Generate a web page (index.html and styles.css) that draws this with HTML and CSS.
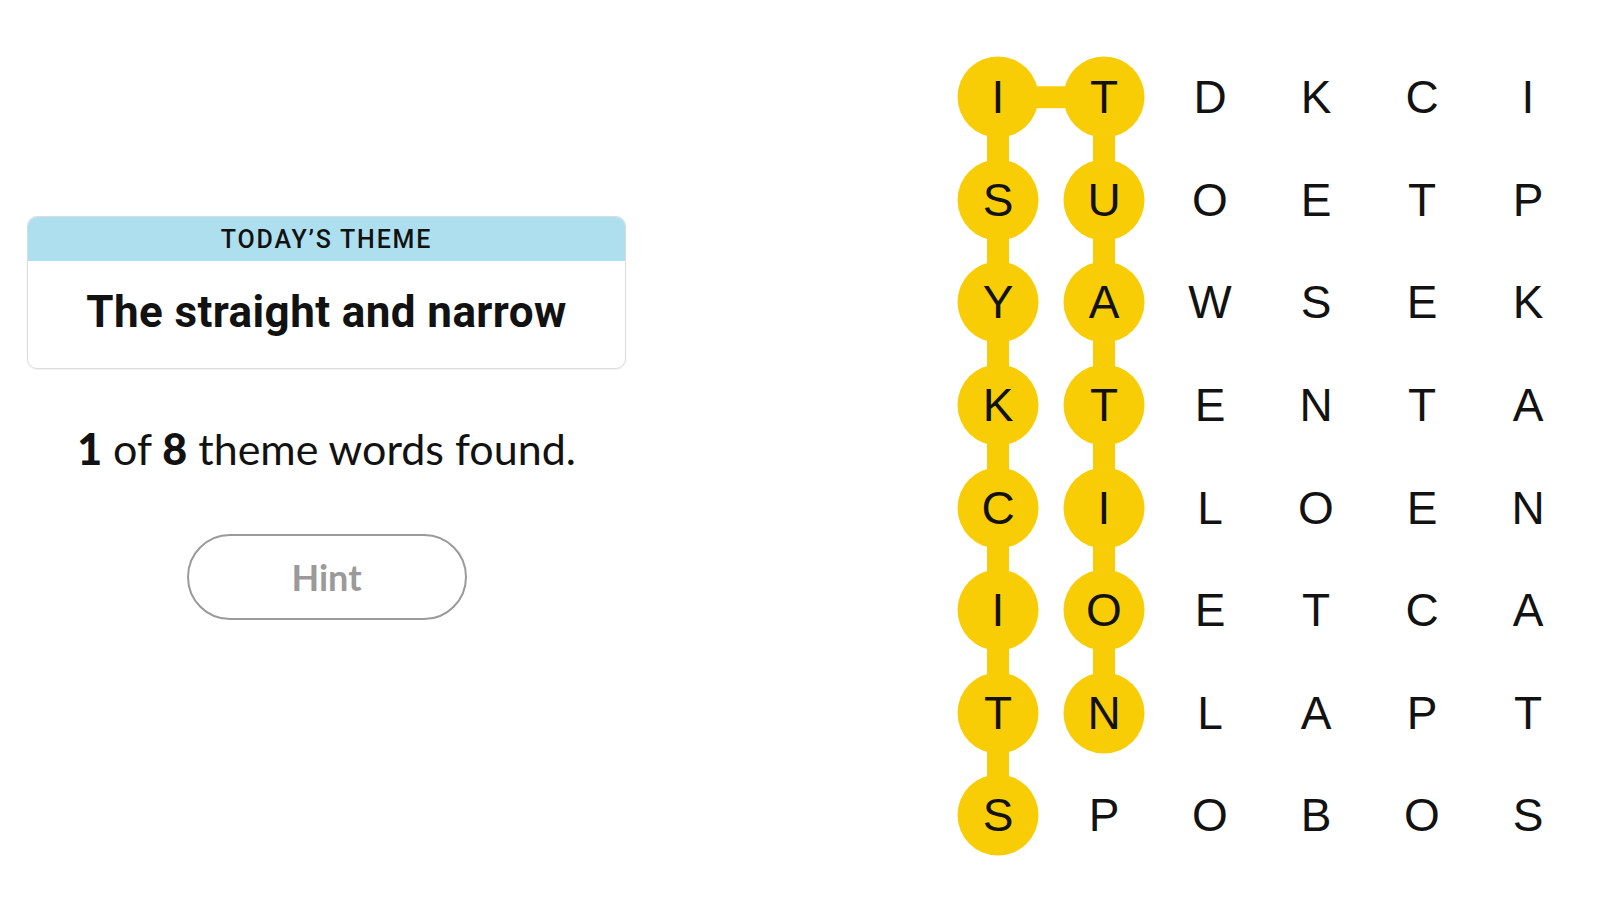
FILE: index.html
```html
<!DOCTYPE html>
<html lang="en">
<head>
<meta charset="utf-8">
<title>Strands</title>
<link rel="stylesheet" href="styles.css">
</head>
<body>
<main class="page">
  <section class="side">
    <div class="theme-card">
      <div class="theme-head">TODAY’S THEME</div>
      <div class="theme-body"><span class="theme-title">The straight and narrow</span></div>
    </div>
    <p class="progress"><b>1</b> of <b>8</b> theme words found.</p>
    <button class="hint" type="button">Hint</button>
  </section>
  <section class="board">
    <svg class="links" width="636" height="821" viewBox="0 0 636 821" aria-hidden="true">
      <g stroke="#f8cd05" stroke-width="22" stroke-linecap="butt" fill="none">
        <line x1="53" y1="51.3" x2="53" y2="769.5"/>
        <line x1="159" y1="51.3" x2="159" y2="666.9"/>
        <line x1="53" y1="51.3" x2="159" y2="51.3"/>
      </g>
    </svg>
    <div class="grid">
      <span class="cell on">I</span><span class="cell on">T</span><span class="cell">D</span><span class="cell">K</span><span class="cell">C</span><span class="cell">I</span>
      <span class="cell on">S</span><span class="cell on">U</span><span class="cell">O</span><span class="cell">E</span><span class="cell">T</span><span class="cell">P</span>
      <span class="cell on">Y</span><span class="cell on">A</span><span class="cell">W</span><span class="cell">S</span><span class="cell">E</span><span class="cell">K</span>
      <span class="cell on">K</span><span class="cell on">T</span><span class="cell">E</span><span class="cell">N</span><span class="cell">T</span><span class="cell">A</span>
      <span class="cell on">C</span><span class="cell on">I</span><span class="cell">L</span><span class="cell">O</span><span class="cell">E</span><span class="cell">N</span>
      <span class="cell on">I</span><span class="cell on">O</span><span class="cell">E</span><span class="cell">T</span><span class="cell">C</span><span class="cell">A</span>
      <span class="cell on">T</span><span class="cell on">N</span><span class="cell">L</span><span class="cell">A</span><span class="cell">P</span><span class="cell">T</span>
      <span class="cell on">S</span><span class="cell">P</span><span class="cell">O</span><span class="cell">B</span><span class="cell">O</span><span class="cell">S</span>
    </div>
  </section>
</main>
</body>
</html>
```

FILE: styles.css
```css
html, body {
  margin: 0;
  padding: 0;
  background: #ffffff;
}

.page {
  display: flex;
  align-items: flex-start;
  gap: 319px;
  padding: 0 0 0 27px;
  width: 1600px;
  height: 900px;
  box-sizing: border-box;
  color: #121212;
}

.side {
  width: 599px;
  display: flex;
  flex-direction: column;
  align-items: center;
  padding-top: 216px;
}

.theme-card {
  width: 100%;
  box-sizing: border-box;
  border: 1px solid #dcdcdc;
  border-radius: 10px;
  overflow: hidden;
  box-shadow: 0 1px 2px rgba(0, 0, 0, 0.06);
}

.theme-head {
  height: 44px;
  background: #aedfee;
  display: flex;
  align-items: center;
  justify-content: center;
  font-family: Roboto, "Liberation Sans", sans-serif;
  font-weight: 500;
  font-size: 25px;
  letter-spacing: 1.8px;
  color: #121212;
}

.theme-body {
  height: 107px;
  display: flex;
  align-items: center;
  justify-content: center;
  padding-bottom: 6px;
  box-sizing: border-box;
}

.theme-title {
  font-family: Roboto, "Liberation Sans", sans-serif;
  font-weight: 700;
  font-size: 44px;
  letter-spacing: 0.4px;
  color: #121212;
}

.progress {
  margin: 50px 0 0;
  font-family: Lato, "Liberation Sans", sans-serif;
  font-size: 43px;
  line-height: 60px;
  color: #121212;
}

.progress b {
  font-weight: 900;
}

.hint {
  margin-top: 55px;
  width: 280px;
  height: 86px;
  box-sizing: border-box;
  border: 2px solid #9a9a9a;
  border-radius: 43px;
  background: #ffffff;
  font-family: Lato, "Liberation Sans", sans-serif;
  font-weight: 700;
  font-size: 36px;
  color: #9a9a9a;
  padding: 0;
}

.board {
  position: relative;
  margin-top: 46px;
  width: 636px;
  height: 821px;
}

.links {
  position: absolute;
  left: 0;
  top: 0;
}

.grid {
  position: relative;
  z-index: 0;
  display: grid;
  grid-template-columns: repeat(6, 106px);
  grid-template-rows: repeat(8, 102.6px);
}

.cell {
  display: flex;
  align-items: center;
  justify-content: center;
  font-family: "Liberation Sans", Arial, sans-serif;
  font-size: 46px;
  color: #121212;
  position: relative;
}

.cell.on::before {
  content: "";
  position: absolute;
  width: 81px;
  height: 81px;
  border-radius: 50%;
  background: #f8cd05;
  left: 50%;
  top: 50%;
  transform: translate(-50%, -50%);
  z-index: -1;
}
```
